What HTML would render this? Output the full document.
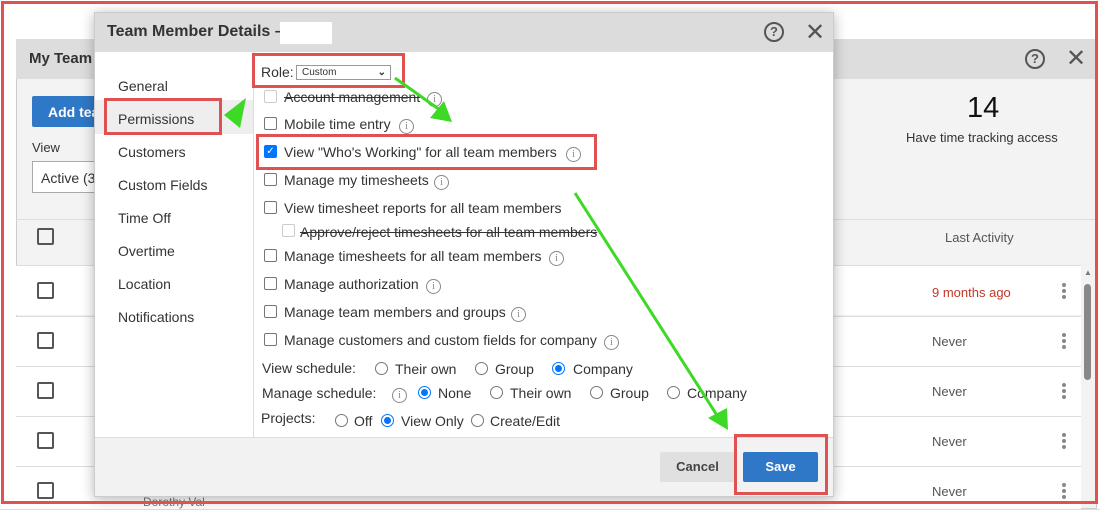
<!DOCTYPE html><html><head><style>
*{box-sizing:border-box;margin:0;padding:0}
body{width:1100px;height:523px;position:relative;overflow:hidden;background:#fff;font-family:"Liberation Sans",sans-serif;color:#333;font-size:14px}
.abs{position:absolute}
.cb{position:absolute;width:13px;height:13px;border:1px solid #767676;border-radius:2px;background:#fff}
.rd{position:absolute;width:13px;height:13px;border:1px solid #767676;border-radius:50%;background:#fff}
.rd.on{border:1px solid #0075ff}
.rd.on::after{content:"";position:absolute;left:2px;top:2px;width:7px;height:7px;border-radius:50%;background:#0075ff}
.info{position:absolute;width:15px;height:15px;border:1px solid #888;border-radius:50%;font-size:10px;color:#888;text-align:center;line-height:13px;font-family:"Liberation Serif",serif}
.t{position:absolute;white-space:nowrap}
.dots{position:absolute;width:4px}
.dots i{display:block;width:4px;height:4px;border-radius:50%;background:#888;margin-bottom:2px}
.row{position:absolute;left:16px;width:1065px;height:50px;border-top:1px solid #ddd;background:#fff}
.bcb{position:absolute;left:37px;width:17px;height:17px;border:2px solid #555;border-radius:2px}
</style></head><body>
<div class="abs" style="left:16px;top:39px;width:1081px;height:470px;background:#f3f3f3;border:1px solid #ccc"></div>
<div class="abs" style="left:16px;top:39px;width:1081px;height:40px;background:#ddd"></div>
<div class="t" style="left:29px;top:50px;font-size:15px;font-weight:bold;color:#333">My Team</div>
<div class="abs" style="left:1025px;top:49px;width:20px;height:20px;border:2px solid #555;border-radius:50%;text-align:center;font-size:13px;line-height:16px;font-weight:bold;color:#555">?</div>
<div class="t" style="left:1066px;top:44px;font-size:24px;color:#555">✕</div>
<div class="abs" style="left:32px;top:96px;width:70px;height:31px;background:#2f78c8;border-radius:2px"></div>
<div class="t" style="left:48px;top:104px;color:#fff;font-weight:bold;font-size:14px">Add tea</div>
<div class="t" style="left:32px;top:140px;font-size:13px">View</div>
<div class="abs" style="left:32px;top:161px;width:70px;height:32px;border:1px solid #aaa;background:#fff"></div>
<div class="t" style="left:41px;top:170px;font-size:14px">Active (3</div>
<div class="t" style="left:967px;top:92px;font-size:29px;color:#111">14</div>
<div class="t" style="left:906px;top:130px;font-size:13px">Have time tracking access</div>
<div class="abs" style="left:16px;top:219px;width:1081px;height:1px;background:#ddd"></div>
<div class="bcb" style="top:228px"></div>
<div class="t" style="left:945px;top:230px;color:#555;font-size:13px">Last Activity</div>
<div class="row" style="top:265px"></div><div class="bcb" style="top:282px"></div>
<div class="row" style="top:316px"></div><div class="bcb" style="top:332px"></div>
<div class="row" style="top:366px"></div><div class="bcb" style="top:382px"></div>
<div class="row" style="top:416px"></div><div class="bcb" style="top:432px"></div>
<div class="row" style="top:466px"></div><div class="bcb" style="top:482px"></div>
<div class="t" style="left:932px;top:285px;color:#c0392b;font-size:13px">9 months ago</div>
<div class="t" style="left:932px;top:334px;color:#555;font-size:13px">Never</div>
<div class="t" style="left:932px;top:384px;color:#555;font-size:13px">Never</div>
<div class="t" style="left:932px;top:434px;color:#555;font-size:13px">Never</div>
<div class="t" style="left:932px;top:484px;color:#555;font-size:13px">Never</div>
<div class="dots" style="left:1062px;top:283px"><i></i><i></i><i></i></div>
<div class="dots" style="left:1062px;top:333px"><i></i><i></i><i></i></div>
<div class="dots" style="left:1062px;top:383px"><i></i><i></i><i></i></div>
<div class="dots" style="left:1062px;top:433px"><i></i><i></i><i></i></div>
<div class="dots" style="left:1062px;top:483px"><i></i><i></i><i></i></div>
<div class="abs" style="left:1084px;top:284px;width:7px;height:96px;background:#888;border-radius:4px"></div>
<div class="t" style="left:1084px;top:268px;font-size:8px;color:#777">▲</div>
<div class="t" style="left:143px;top:495px;font-size:12px;color:#777">Dorothy Val</div>
<div class="abs" style="left:0;top:509px;width:1100px;height:1px;background:#ddd"></div>

<div class="abs" style="left:94px;top:12px;width:740px;height:485px;background:#fff;border:1px solid #ccc;box-shadow:0 2px 12px rgba(0,0,0,.3)"></div>
<div class="abs" style="left:95px;top:13px;width:738px;height:39px;background:#dcdcdc"></div>
<div class="t" style="left:107px;top:23px;font-size:16px;font-weight:bold;color:#333">Team Member Details –</div>
<div class="abs" style="left:280px;top:22px;width:52px;height:22px;background:#fff"></div>
<div class="abs" style="left:764px;top:22px;width:20px;height:20px;border:2px solid #555;border-radius:50%;text-align:center;font-size:13px;line-height:16px;font-weight:bold;color:#555">?</div>
<div class="t" style="left:805px;top:18px;font-size:24px;color:#555">✕</div>
<div class="abs" style="left:253px;top:52px;width:1px;height:385px;background:#ddd"></div>
<div class="abs" style="left:95px;top:100px;width:158px;height:34px;background:#eee"></div>
<div class="t" style="left:118px;top:78px">General</div>
<div class="t" style="left:118px;top:111px">Permissions</div>
<div class="t" style="left:118px;top:144px">Customers</div>
<div class="t" style="left:118px;top:177px">Custom Fields</div>
<div class="t" style="left:118px;top:210px">Time Off</div>
<div class="t" style="left:118px;top:243px">Overtime</div>
<div class="t" style="left:118px;top:276px">Location</div>
<div class="t" style="left:118px;top:309px">Notifications</div>
<div class="t" style="left:261px;top:64px">Role:</div>
<div class="abs" style="left:296px;top:65px;width:95px;height:15px;border:1px solid #999;font-size:10px;padding-left:5px;line-height:13px">Custom<span style="position:absolute;right:4px;top:0;font-weight:bold">⌄</span></div>
<div class="cb" style="left:264px;top:90px;border-color:#ccc"></div><div class="t" style="left:284px;top:89px;text-decoration:line-through">Account management</div><div class="info" style="left:427px;top:92px">i</div>
<div class="cb" style="left:264px;top:117px"></div><div class="t" style="left:284px;top:116px">Mobile time entry</div><div class="info" style="left:399px;top:119px">i</div>
<div class="cb" style="left:264px;top:145px;background:#0075ff;border-color:#0075ff;color:#fff;font-size:10px;line-height:11px;text-align:center">✓</div><div class="t" style="left:284px;top:144px">View "Who's Working" for all team members</div><div class="info" style="left:566px;top:147px">i</div>
<div class="cb" style="left:264px;top:173px"></div><div class="t" style="left:284px;top:172px">Manage my timesheets</div><div class="info" style="left:434px;top:175px">i</div>
<div class="cb" style="left:264px;top:201px"></div><div class="t" style="left:284px;top:200px">View timesheet reports for all team members</div>
<div class="cb" style="left:282px;top:224px;border-color:#ccc"></div><div class="t" style="left:300px;top:224px;text-decoration:line-through">Approve/reject timesheets for all team members</div>
<div class="cb" style="left:264px;top:249px"></div><div class="t" style="left:284px;top:248px">Manage timesheets for all team members</div><div class="info" style="left:549px;top:251px">i</div>
<div class="cb" style="left:264px;top:277px"></div><div class="t" style="left:284px;top:276px">Manage authorization</div><div class="info" style="left:426px;top:279px">i</div>
<div class="cb" style="left:264px;top:305px"></div><div class="t" style="left:284px;top:304px">Manage team members and groups</div><div class="info" style="left:511px;top:307px">i</div>
<div class="cb" style="left:264px;top:333px"></div><div class="t" style="left:284px;top:332px">Manage customers and custom fields for company</div><div class="info" style="left:604px;top:335px">i</div>
<div class="t" style="left:262px;top:360px">View schedule:</div>
<div class="rd" style="left:375px;top:362px"></div><div class="t" style="left:395px;top:361px">Their own</div>
<div class="rd" style="left:475px;top:362px"></div><div class="t" style="left:495px;top:361px">Group</div>
<div class="rd on" style="left:552px;top:362px"></div><div class="t" style="left:573px;top:361px">Company</div>
<div class="t" style="left:262px;top:385px">Manage schedule:</div><div class="info" style="left:392px;top:388px">i</div>
<div class="rd on" style="left:418px;top:386px"></div><div class="t" style="left:438px;top:385px">None</div>
<div class="rd" style="left:490px;top:386px"></div><div class="t" style="left:510px;top:385px">Their own</div>
<div class="rd" style="left:590px;top:386px"></div><div class="t" style="left:610px;top:385px">Group</div>
<div class="rd" style="left:667px;top:386px"></div><div class="t" style="left:687px;top:385px">Company</div>
<div class="t" style="left:261px;top:410px">Projects:</div>
<div class="rd" style="left:335px;top:414px"></div><div class="t" style="left:354px;top:413px">Off</div>
<div class="rd on" style="left:381px;top:414px"></div><div class="t" style="left:401px;top:413px">View Only</div>
<div class="rd" style="left:471px;top:414px"></div><div class="t" style="left:490px;top:413px">Create/Edit</div>
<div class="abs" style="left:95px;top:437px;width:738px;height:59px;background:#f2f2f2;border-top:1px solid #ddd"></div>
<div class="abs" style="left:660px;top:452px;width:75px;height:30px;background:#e0e0e0;border-radius:2px;text-align:center;line-height:30px;font-weight:bold;color:#444;font-size:13px">Cancel</div>
<div class="abs" style="left:743px;top:452px;width:75px;height:30px;background:#2f78c8;border-radius:2px;text-align:center;line-height:30px;font-weight:bold;color:#fff;font-size:13px">Save</div>
<div class="abs" style="left:1px;top:1px;width:1097px;height:503px;border:3px solid #e05252"></div>
<div class="abs" style="left:252px;top:53px;width:153px;height:35px;border:3px solid #e05252"></div>
<div class="abs" style="left:104px;top:98px;width:118px;height:37px;border:3px solid #e05252"></div>
<div class="abs" style="left:256px;top:134px;width:341px;height:36px;border:3px solid #e05252"></div>
<div class="abs" style="left:734px;top:434px;width:94px;height:61px;border:3px solid #e05252"></div>
<svg class="abs" style="left:0;top:0" width="1100" height="523">
<g stroke="#3ed926" stroke-width="3" fill="#3ed926">
<line x1="395" y1="78" x2="440" y2="110"/>
<polygon points="430,118 452,122 444,101" stroke="none"/>
<line x1="575" y1="193" x2="720" y2="420"/>
<polygon points="708,418 728,430 727,408" stroke="none"/>
<polygon points="224,115 246,98 240,128" stroke="none"/>
</g></svg>
</body></html>
